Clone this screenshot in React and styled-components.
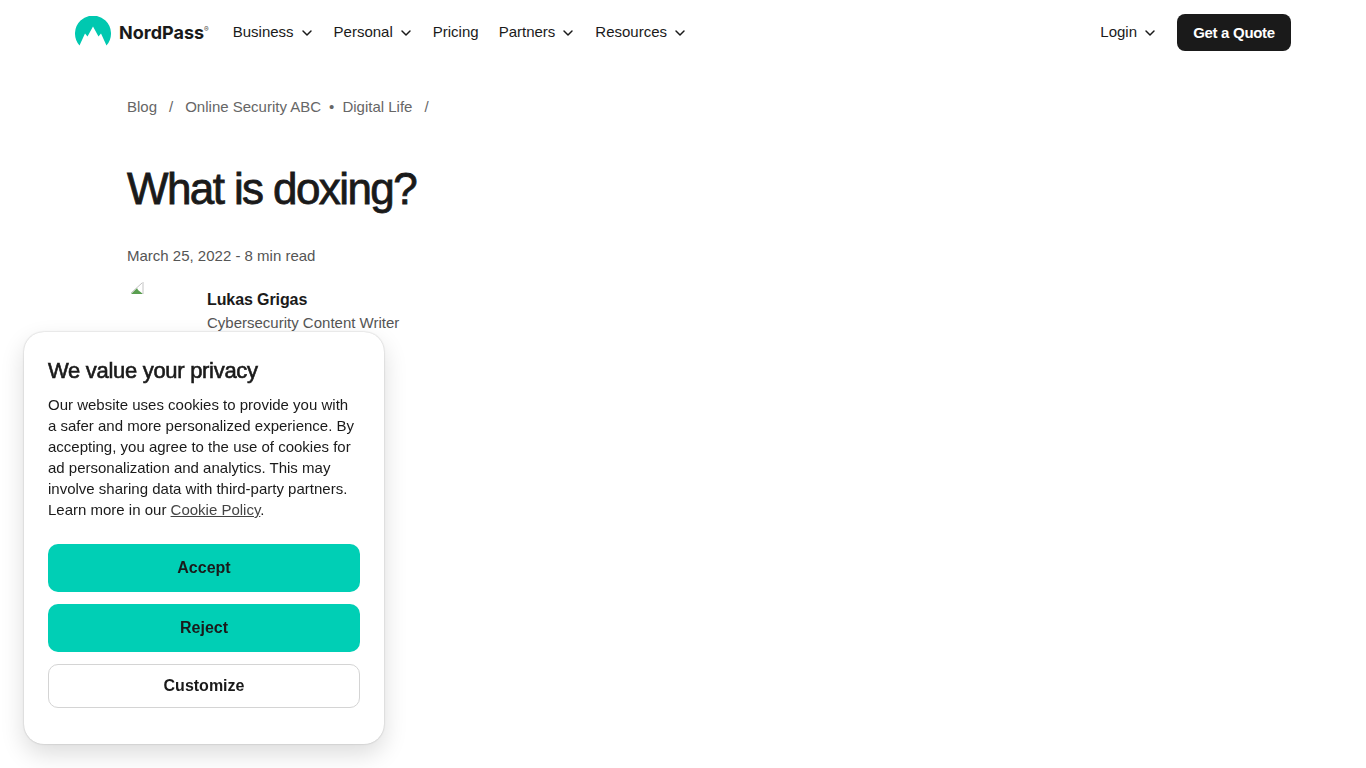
import React from 'react'
import styled, { createGlobalStyle } from 'styled-components'
import { ChevronDown } from 'lucide-react'

const GlobalStyle = createGlobalStyle`
  html, body {
    margin: 0;
    background: #fff;
    color: #1a1a1a;
    font-family: "Liberation Sans", Arial, sans-serif;
  }
  * { box-sizing: border-box; }
`

const Header = styled.header`
  height: 64px;
  padding: 0 75px;
  display: flex;
  align-items: center;
  justify-content: space-between;
`
const Left = styled.div`
  display: flex;
  align-items: center;
`
const Brand = styled.a`
  display: flex;
  align-items: center;
  gap: 8px;
  margin-right: 24px;
  svg {
    margin-top: -2px;
  }
`
const Wordmark = styled.span`
  font-family: Inter, "Liberation Sans", sans-serif;
  font-weight: 700;
  font-size: 18px;
  color: #1a1a1a;
  sup {
    font-size: 7px;
    vertical-align: 7px;
    line-height: 0;
    color: #555;
  }
`
const Nav = styled.nav`
  display: flex;
  align-items: center;
  gap: 20px;
`
const NavItem = styled.a`
  display: flex;
  align-items: center;
  gap: 5px;
  font-size: 15px;
  line-height: 20px;
  color: #1a1a1a;
  svg {
    margin: 1px -1px 0 0;
  }
`
const Right = styled.div`
  display: flex;
  align-items: center;
  gap: 20px;
`
const QuoteButton = styled.button`
  width: 114px;
  height: 37px;
  border: 0;
  border-radius: 8px;
  background: #1a1a1a;
  color: #fff;
  font: 700 15px "Liberation Sans", Arial, sans-serif;
  letter-spacing: -0.3px;
`
const Main = styled.main`
  padding: 31px 127px 0;
`
const Crumbs = styled.div`
  display: flex;
  align-items: center;
  height: 22px;
  font-size: 15px;
  color: #666;
`
const Sep = styled.span`
  margin: 0 ${p => p.$gap}px;
`
const Title = styled.h1`
  margin: 44px 0 0;
  font-size: 44px;
  line-height: 56px;
  font-weight: 400;
  letter-spacing: -1.6px;
  color: #1a1a1a;
  -webkit-text-stroke: 0.8px #1a1a1a;
`
const Meta = styled.div`
  margin-top: 28px;
  font-size: 15px;
  line-height: 22px;
  color: #555;
`
const Author = styled.div`
  margin-top: 15px;
  display: flex;
  gap: 16px;
`
const Avatar = styled.div`
  width: 64px;
  height: 64px;
  padding: 0 3px;
`
const AuthorName = styled.div`
  font-size: 16px;
  font-weight: 700;
  line-height: 24px;
  letter-spacing: -0.1px;
  margin-top: 6px;
`
const AuthorRole = styled.div`
  font-size: 15px;
  line-height: 22px;
  color: #555;
`
const Cookie = styled.aside`
  position: fixed;
  left: 24px;
  bottom: 24px;
  width: 360px;
  height: 412px;
  padding: 24px;
  background: #fff;
  border-radius: 20px;
  box-shadow: 0 0 2px rgba(0, 0, 0, 0.25), 0 10px 24px rgba(0, 0, 0, 0.14);
`
const CookieTitle = styled.h2`
  margin: 0;
  font-size: 22px;
  line-height: 30px;
  font-weight: 400;
  letter-spacing: -0.3px;
  -webkit-text-stroke: 0.6px #1a1a1a;
`
const CookieText = styled.p`
  margin: 8px 0 24px;
  font-size: 15px;
  line-height: 21px;
  color: #1a1a1a;
  a {
    color: #444;
    text-decoration: underline;
  }
`
const Actions = styled.div`
  display: flex;
  flex-direction: column;
  gap: 12px;
`
const ActionButton = styled.button`
  height: ${p => (p.$outline ? 44 : 48)}px;
  border-radius: 10px;
  border: ${p => (p.$outline ? '1px solid #d4d4d4' : '0')};
  background: ${p => (p.$outline ? '#fff' : '#00cfb5')};
  color: #1a1a1a;
  font: 700 16px "Liberation Sans", Arial, sans-serif;
`

const Logo = () => (
  <svg width="36" height="30" viewBox="0 0 36 30">
    <path
      d="M4.5 29.5A18 18 0 1 1 31.5 29.5L26 17.5 23.5 20.5 18 10.5 12.5 20.5 10 17.5Z"
      fill="#00c8b0"
    />
  </svg>
)

const BrokenImage = () => (
  <svg width="14" height="14" viewBox="0 0 14 14">
    <path d="M1 12 7 6 8 8 13 12Z" fill="#5a9e50" />
    <path d="M13 0V12M1 11 12 1" stroke="#c4c4c4" strokeWidth="1" fill="none" />
  </svg>
)

const links = [
  ['Business', true],
  ['Personal', true],
  ['Pricing', false],
  ['Partners', true],
  ['Resources', true],
]

export default function App() {
  return (
    <>
      <GlobalStyle />
      <Header>
        <Left>
          <Brand>
            <Logo />
            <Wordmark>NordPass<sup>®</sup></Wordmark>
          </Brand>
          <Nav>
            {links.map(([label, hasMenu]) => (
              <NavItem key={label}>
                {label}
                {hasMenu && <ChevronDown size={16} strokeWidth={2.2} />}
              </NavItem>
            ))}
          </Nav>
        </Left>
        <Right>
          <NavItem>Login <ChevronDown size={16} strokeWidth={2.2} /></NavItem>
          <QuoteButton>Get a Quote</QuoteButton>
        </Right>
      </Header>
      <Main>
        <Crumbs>
          Blog<Sep $gap={12}>/</Sep>Online Security ABC<Sep $gap={8}>•</Sep>Digital Life<Sep $gap={12}>/</Sep>
        </Crumbs>
        <Title>What is doxing?</Title>
        <Meta>March 25, 2022 - 8 min read</Meta>
        <Author>
          <Avatar><BrokenImage /></Avatar>
          <div>
            <AuthorName>Lukas Grigas</AuthorName>
            <AuthorRole>Cybersecurity Content Writer</AuthorRole>
          </div>
        </Author>
      </Main>
      <Cookie>
        <CookieTitle>We value your privacy</CookieTitle>
        <CookieText>
          Our website uses cookies to provide you with a safer and more personalized experience. By accepting, you agree to the use of cookies for ad personalization and analytics. This may involve sharing data with third-party partners. Learn more in our <a>Cookie Policy</a>.
        </CookieText>
        <Actions>
          <ActionButton>Accept</ActionButton>
          <ActionButton>Reject</ActionButton>
          <ActionButton $outline>Customize</ActionButton>
        </Actions>
      </Cookie>
    </>
  )
}
